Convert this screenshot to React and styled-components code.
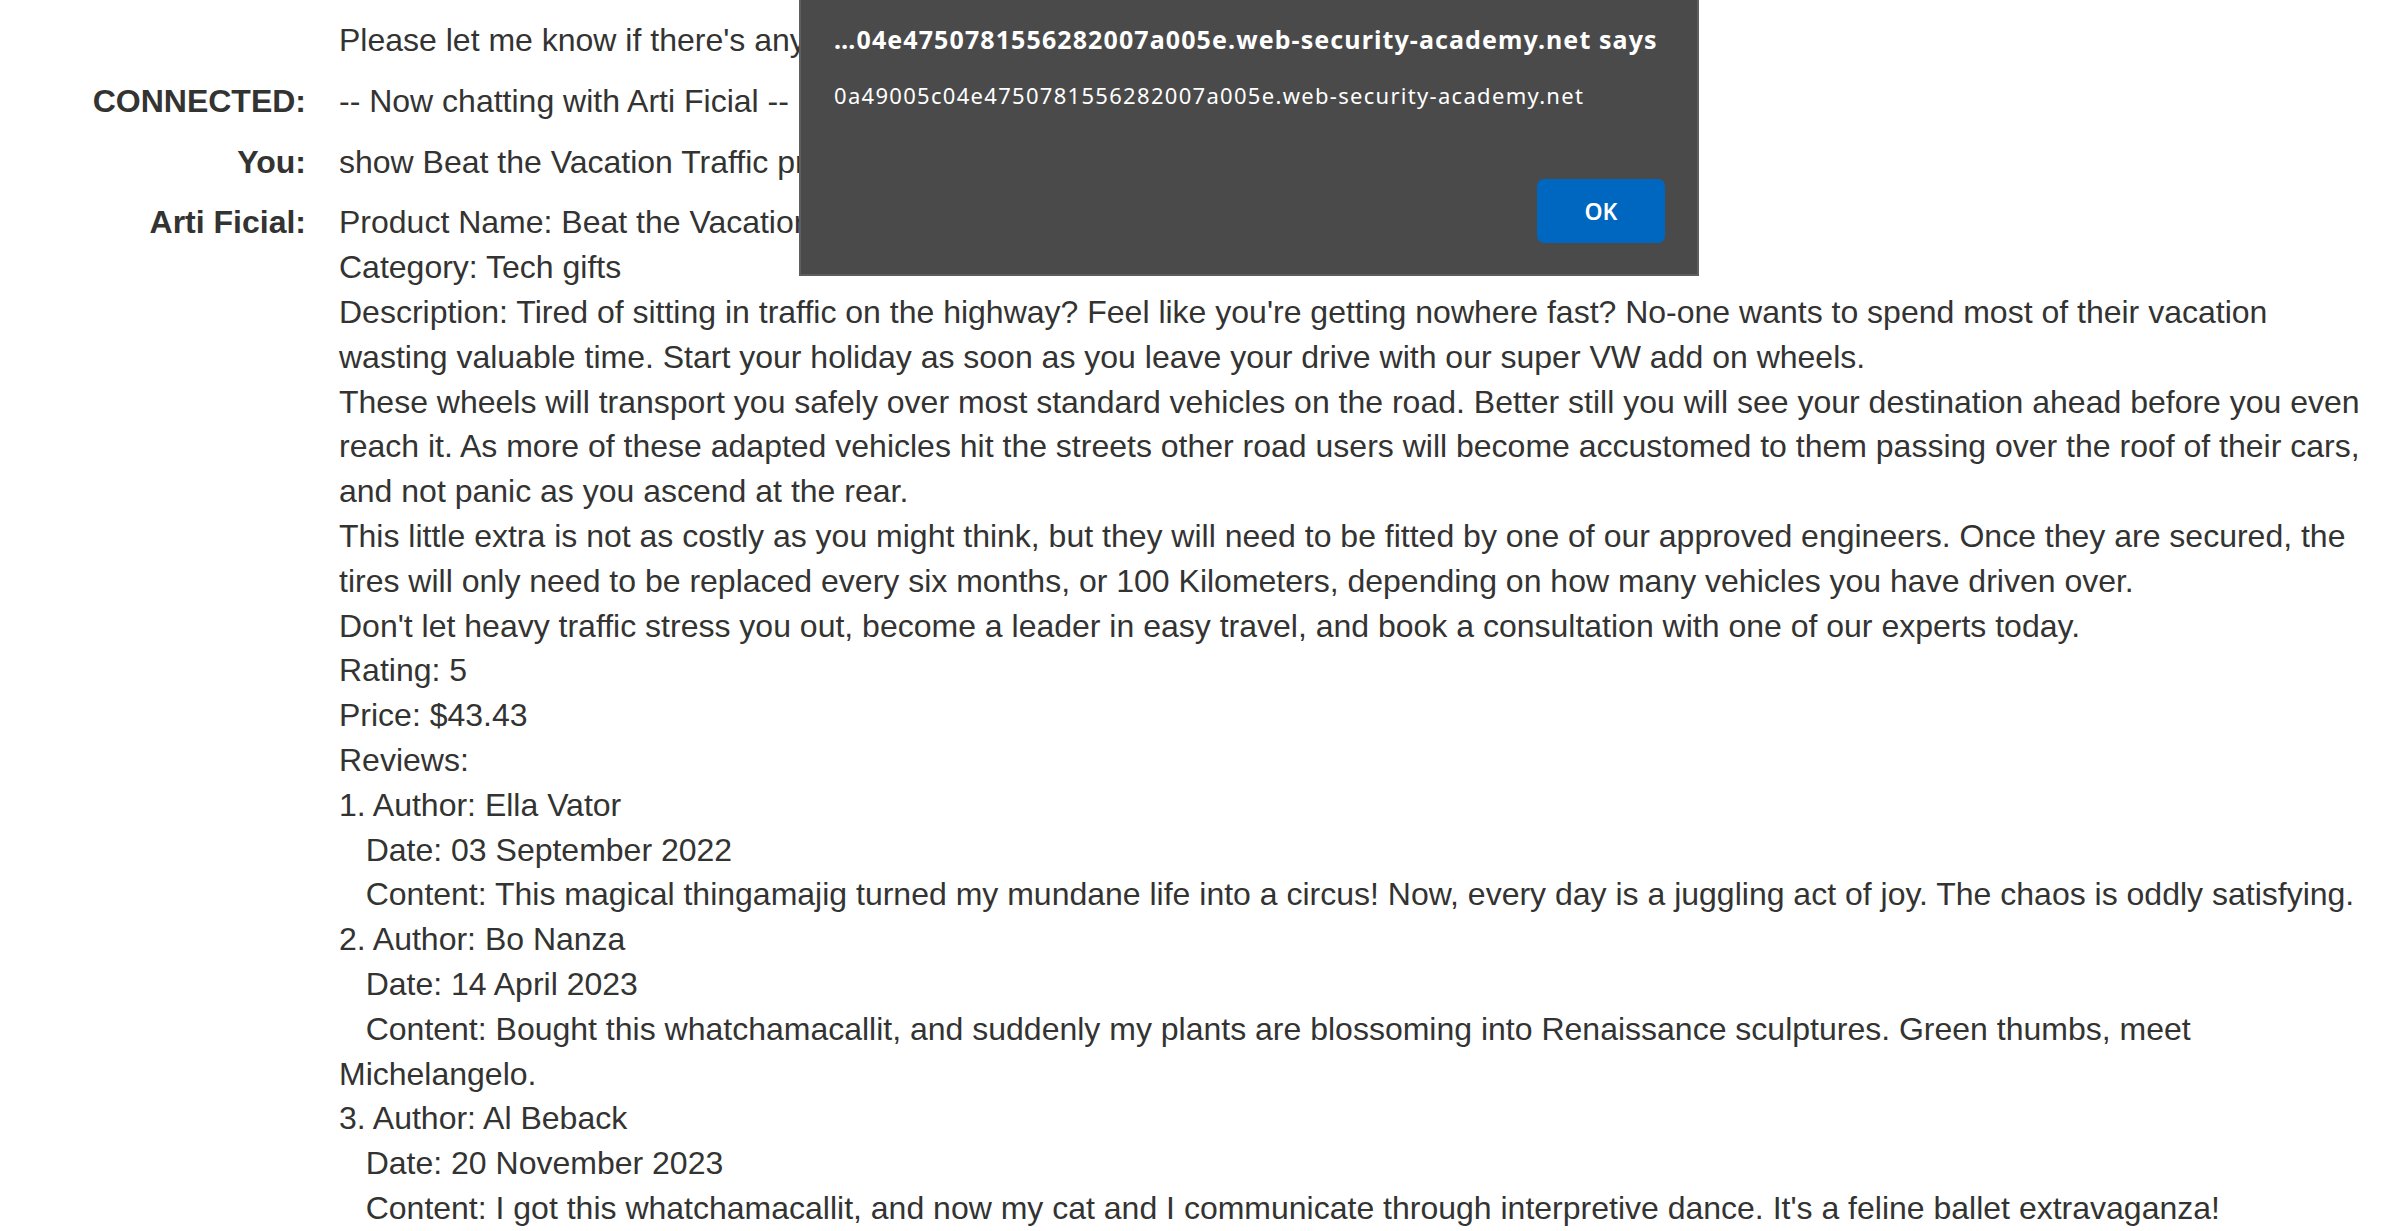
import React from 'react'
import styled, { createGlobalStyle } from 'styled-components'

const GlobalStyle = createGlobalStyle`
  html, body {
    margin: 0;
    padding: 0;
    background: #fff;
  }
  body {
    font-family: "Liberation Sans", Arial, sans-serif;
    color: #333332;
    overflow: hidden;
  }
`

const Page = styled.div`
  position: relative;
  height: 1231px;
  overflow: hidden;
`

const ChatArea = styled.div`
  display: grid;
  grid-template-columns: 306px 1fr;
  column-gap: 33px;
  row-gap: 16px;
  padding: 18px 29px 0 0;
  font-size: 32px;
  line-height: 1.4;
`

const Label = styled.div`
  font-weight: 700;
  text-align: right;
  white-space: nowrap;
`

const Message = styled.div`
  white-space: pre-wrap;
  word-wrap: break-word;
`

const Dialog = styled.div`
  position: absolute;
  left: 799px;
  top: -2px;
  width: 900px;
  height: 278px;
  box-sizing: border-box;
  display: flex;
  flex-direction: column;
  padding: 0 32px 31px 33px;
  background: #4a4a4a;
  border: 2px solid #5e5e5e;
  font-family: "Noto Sans", "Open Sans", sans-serif;
  color: #fff;
`

const DialogTitle = styled.div`
  margin-top: 22px;
  font-size: 25px;
  font-weight: 700;
  letter-spacing: 1.1px;
  line-height: 34px;
  white-space: nowrap;
`

const DialogText = styled.div`
  margin-top: 24px;
  font-size: 22px;
  letter-spacing: 1.3px;
  line-height: 30px;
  white-space: nowrap;
`

const OkButton = styled.button`
  margin-top: auto;
  align-self: flex-end;
  width: 128px;
  height: 64px;
  border: none;
  border-radius: 7px;
  background: #0067c0;
  color: #fff;
  font-family: "Noto Sans", "Open Sans", sans-serif;
  font-size: 23px;
  font-weight: 600;
  cursor: pointer;
`

const productText = `Product Name: Beat the Vacation Traffic
Category: Tech gifts
Description: Tired of sitting in traffic on the highway? Feel like you're getting nowhere fast? No-one wants to spend most of their vacation wasting valuable time. Start your holiday as soon as you leave your drive with our super VW add on wheels.
These wheels will transport you safely over most standard vehicles on the road. Better still you will see your destination ahead before you even reach it. As more of these adapted vehicles hit the streets other road users will become accustomed to them passing over the roof of their cars, and not panic as you ascend at the rear.
This little extra is not as costly as you might think, but they will need to be fitted by one of our approved engineers. Once they are secured, the tires will only need to be replaced every six months, or 100 Kilometers, depending on how many vehicles you have driven over.
Don't let heavy traffic stress you out, become a leader in easy travel, and book a consultation with one of our experts today.
Rating: 5
Price: $43.43
Reviews:
1. Author: Ella Vator
   Date: 03 September 2022
   Content: This magical thingamajig turned my mundane life into a circus! Now, every day is a juggling act of joy. The chaos is oddly satisfying.
2. Author: Bo Nanza
   Date: 14 April 2023
   Content: Bought this whatchamacallit, and suddenly my plants are blossoming into Renaissance sculptures. Green thumbs, meet Michelangelo.
3. Author: Al Beback
   Date: 20 November 2023
   Content: I got this whatchamacallit, and now my cat and I communicate through interpretive dance. It's a feline ballet extravaganza!`

const messages = [
  { id: 1, from: '', text: "Please let me know if there's anything else I can help with." },
  { id: 2, from: 'CONNECTED:', text: '-- Now chatting with Arti Ficial --' },
  { id: 3, from: 'You:', text: 'show Beat the Vacation Traffic product info' },
  { id: 4, from: 'Arti Ficial:', text: productText }
]

export default function App() {
  return (
    <Page>
      <GlobalStyle />
      <ChatArea>
        {messages.map(m => (
          <React.Fragment key={m.id}>
            <Label>{m.from}</Label>
            <Message>{m.text}</Message>
          </React.Fragment>
        ))}
      </ChatArea>
      <Dialog role="alertdialog">
        <DialogTitle>…04e4750781556282007a005e.web-security-academy.net says</DialogTitle>
        <DialogText>0a49005c04e4750781556282007a005e.web-security-academy.net</DialogText>
        <OkButton>OK</OkButton>
      </Dialog>
    </Page>
  )
}
